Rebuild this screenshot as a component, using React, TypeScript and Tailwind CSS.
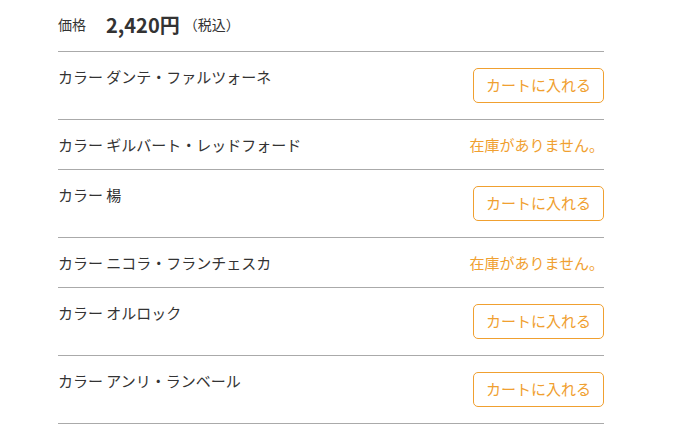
const items: { name: string; inStock: boolean }[] = [
  { name: "カラー ダンテ・ファルツォーネ", inStock: true },
  { name: "カラー ギルバート・レッドフォード", inStock: false },
  { name: "カラー 楊", inStock: true },
  { name: "カラー ニコラ・フランチェスカ", inStock: false },
  { name: "カラー オルロック", inStock: true },
  { name: "カラー アンリ・ランベール", inStock: true },
];

export default function App() {
  return (
    <div
      className="min-h-[438px] bg-white pl-[58px] text-[#333]"
      style={{ fontFamily: '"Noto Sans CJK JP", "Noto Sans", sans-serif' }}
    >
      <div className="w-[546px]">
        <div className="flex h-[52px] items-center border-b border-[#aaa] pb-[2px]">
          <span className="text-[14px]">価格</span>
          <span className="ml-[20px] text-[20px] font-bold">2,420円</span>
          <span className="ml-[4px] text-[14px]">（税込）</span>
        </div>
        {items.map((item) => (
          <div
            key={item.name}
            className="flex items-start justify-between border-b border-[#aaa] py-[16px]"
          >
            <span className="text-[15px] leading-[17px]">{item.name}</span>
            {item.inStock ? (
              <button className="h-[35px] w-[131px] rounded-[5px] border border-[#f0a030] text-[15px] text-[#f0a030]">
                カートに入れる
              </button>
            ) : (
              <span className="text-[15px] leading-[17px] text-[#f0a030]">在庫がありません。</span>
            )}
          </div>
        ))}
      </div>
    </div>
  );
}
